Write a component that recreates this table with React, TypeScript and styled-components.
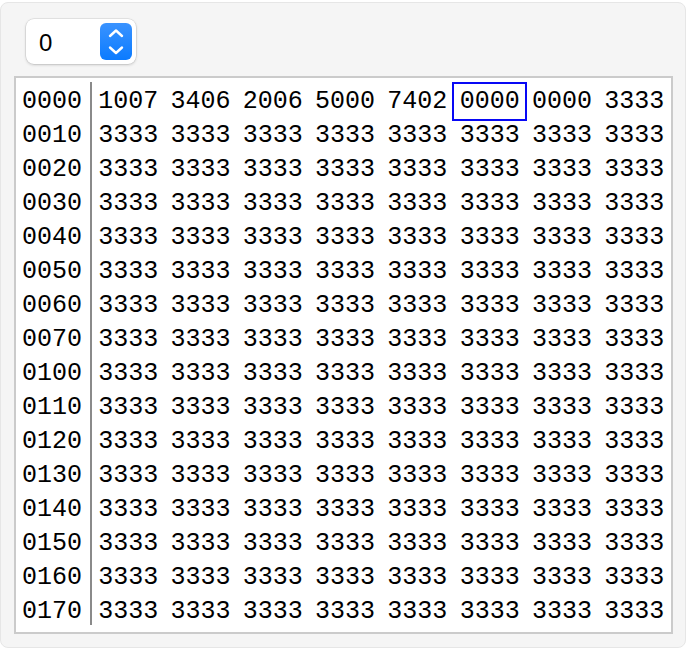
import React from "react";
import styled, { createGlobalStyle } from "styled-components";

const Global = createGlobalStyle`
  html, body { margin: 0; padding: 0; background: #ffffff; }
  body { font-family: "Liberation Sans", Arial, sans-serif; }
`;

const Panel = styled.div`
  box-sizing: border-box;
  margin-top: 2px;
  width: 686px;
  height: 646px;
  background: #f5f5f5;
  border: 1px solid #e6e6e6;
  border-radius: 8px;
  padding: 15px 0 0 13px;
  display: flex;
  flex-direction: column;
  align-items: flex-start;
`;

const Select = styled.div`
  box-sizing: border-box;
  margin-left: 12px;
  margin-top: 1px;
  width: 110px;
  height: 45px;
  background: #ffffff;
  border-radius: 8px;
  box-shadow: 0 0 0 0.5px rgba(0, 0, 0, 0.12), 0 1px 3px rgba(0, 0, 0, 0.18);
  display: flex;
  align-items: center;
  justify-content: space-between;
  padding: 0 4px 0 13px;
`;

const SelectValue = styled.span`
  font-family: "Liberation Sans", Arial, sans-serif;
  font-size: 24px;
  line-height: 1;
  margin-top: 3px;
  color: #000;
`;

const Stepper = styled.div`
  width: 32px;
  height: 37px;
  border-radius: 6px;
  background: linear-gradient(#3a93ff, #0b7bff);
  display: flex;
  align-items: center;
  justify-content: center;
`;

const Memory = styled.div`
  box-sizing: border-box;
  margin-top: 12px;
  width: 659px;
  height: 558px;
  background: #ffffff;
  border: 2px solid #cbcbcb;
  padding: 5px 0;
  display: grid;
  grid-template-columns: 74px 2px repeat(8, 72.3px);
  grid-auto-rows: 34px;
  font-family: "Liberation Mono", "DejaVu Sans Mono", monospace;
  font-size: 25px;
  color: #000;
`;

const Addr = styled.div`
  display: flex;
  align-items: center;
  padding: 2px 0 0 6px;
`;

const Sep = styled.div<{ $first: boolean; $last: boolean }>`
  background: #8a8a8a;
  margin-top: ${(p) => (p.$first ? "-1px" : "0")};
  margin-bottom: ${(p) => (p.$last ? "2px" : "0")};
`;

const Cell = styled.div<{ $sel: boolean }>`
  position: relative;
  display: flex;
  align-items: center;
  justify-content: center;
  padding-top: 2px;
  &::after {
    content: "";
    display: ${(p) => (p.$sel ? "block" : "none")};
    position: absolute;
    left: -1px;
    right: -1px;
    top: -1px;
    bottom: -4px;
    border: 2px solid #0808f5;
  }
`;

const first = ["1007", "3406", "2006", "5000", "7402", "0000", "0000", "3333"];

export default function App() {
  const rows = Array.from({ length: 16 }, (_, i) => i);
  return (
    <>
      <Global />
      <Panel>
        <Select>
          <SelectValue>0</SelectValue>
          <Stepper>
            <svg width="32" height="37" viewBox="0 0 32 37" fill="none">
              <path d="M10 13 L16 7.5 L22 13" stroke="#fff" strokeWidth="2.4" strokeLinecap="round" strokeLinejoin="round" />
              <path d="M10 24.5 L16 30 L22 24.5" stroke="#fff" strokeWidth="2.4" strokeLinecap="round" strokeLinejoin="round" />
            </svg>
          </Stepper>
        </Select>
        <Memory>
          {rows.map((r) => {
            const addr = (r * 8).toString(8).padStart(4, "0");
            const vals = r === 0 ? first : Array(8).fill("3333");
            return (
              <React.Fragment key={r}>
                <Addr>{addr}</Addr>
                <Sep $first={r === 0} $last={r === 15} />
                {vals.map((v, c) => (
                  <Cell key={c} $sel={r === 0 && c === 5}>
                    {v}
                  </Cell>
                ))}
              </React.Fragment>
            );
          })}
        </Memory>
      </Panel>
    </>
  );
}
